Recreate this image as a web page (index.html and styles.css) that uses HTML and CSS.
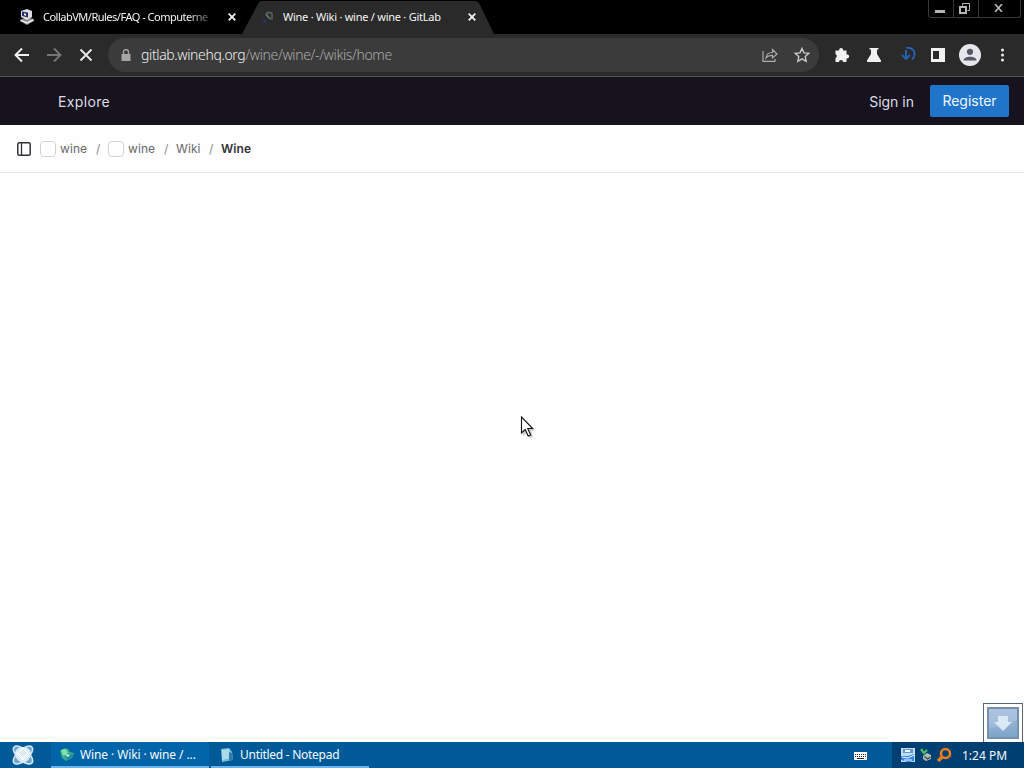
FILE: index.html
```
<!DOCTYPE html>
<html lang="en">
<head>
    <meta charset="UTF-8">
    <meta name="viewport" content="width=device-width, initial-scale=1.0">
    <title>Wine · Wiki · wine / wine · GitLab</title>
    <link rel="stylesheet" href="styles.css">
</head>
<body>
    <div class="tabstrip">
        <div class="tab">
            <svg class="favicon" width="16" height="16" viewBox="0 0 16 16">
                <path d="M1 11l6-3 8 2v2l-7 4-7-4z" fill="#8d8d8d"/>
                <path d="M2 11.500l6 2.500 6-3" fill="none" stroke="#eee" stroke-width="1.500"/>
                <path d="M2 2l6-2 5 2v6l-5 3-6-3z" fill="#ddd"/>
                <path d="M3 2.500l6 1v5L3 7z" fill="#2b2b72"/>
                <path d="M5 4l2 1v2L5 6z" fill="#fff"/>
            </svg>
            <span class="tab-title faded">CollabVM/Rules/FAQ - Computerne</span>
            <svg class="tab-close" width="8" height="8" viewBox="0 0 8 8"><path d="M.7.7l6.600 6.600M7.300.7L.7 7.300"/></svg>
        </div>
        <div class="tab active">
            <svg class="favicon" width="16" height="16" viewBox="0 0 16 16">
                <path d="M6 4.500q3-2 6 0v5H9" fill="none" stroke="#52604f" stroke-width="1.800"/>
                <path d="M6 5l3 4" stroke="#65716c" stroke-width="2"/>
                <path d="M3 11h4l-3 3z" fill="#20388c"/>
            </svg>
            <span class="tab-title">Wine · Wiki · wine / wine · GitLab</span>
            <svg class="tab-close" width="8" height="8" viewBox="0 0 8 8"><path d="M.7.7l6.600 6.600M7.300.7L.7 7.300"/></svg>
        </div>
        <div class="window-buttons">
            <span class="win-btn"><svg width="10" height="10" viewBox="0 0 10 10"><path d="M0 7h10v3H0z" fill="#b5b5b5"/></svg></span>
            <span class="win-btn"><svg width="11" height="11" viewBox="0 0 11 11" fill="none" stroke="#b5b5b5"><path d="M3.500 2.500v-2h7v7h-2" stroke-width="1"/><path d="M1 4h6v6H1z" stroke-width="2"/></svg></span>
            <span class="win-btn wide"><svg width="9" height="8" viewBox="0 0 9 8"><path d="M1 0l7 8M8 0L1 8" stroke="#b5b5b5" stroke-width="1.700"/></svg></span>
        </div>
    </div>

    <div class="toolbar">
        <div class="nav-buttons">
            <svg width="16" height="16" viewBox="0 0 16 16"><path d="M15 8H2M8 1.500L1.500 8 8 14.500" stroke="#f1f1f1"/></svg>
            <svg width="16" height="16" viewBox="0 0 16 16"><path d="M1 8h13M8 1.500L14.500 8 8 14.500" stroke="#767676"/></svg>
            <svg width="16" height="16" viewBox="0 0 16 16"><path d="M2.500 2.500l11 11M13.500 2.500l-11 11" stroke="#e8e8e8"/></svg>
        </div>
        <div class="omnibox">
            <svg class="lock" width="10" height="13" viewBox="0 0 10 13"><path d="M.5 5h9v7h-9z" fill="#a4a4a4"/><path d="M2.500 5V3a2.500 2.500 0 0 1 5 0v2" fill="none" stroke="#a4a4a4" stroke-width="1.400"/></svg>
            <span class="url"><span class="host">gitlab.winehq.org</span>/wine/wine/-/wikis/home</span>
            <svg class="share" width="16" height="16" viewBox="0 0 16 16" fill="none" stroke="#aaa" stroke-width="1.200"><path d="M1 4v10.400h12V12"/><path d="M4 11c.5-4 3-5.500 6.500-5.500V2.500L15 7l-4.500 4V8.300C8 8.300 5.500 9 4 11z"/></svg>
            <svg class="star" width="16" height="16" viewBox="0 0 16 16"><path d="M8 1.500l2 4.400 4.700.5-3.500 3.200 1 4.700L8 11.900l-4.200 2.400 1-4.700L1.300 6.400 6 5.900z" fill="none" stroke="#c9c9c9" stroke-width="1.400"/></svg>
        </div>
        <div class="extensions">
            <svg width="16" height="16" viewBox="0 0 16 16"><path d="M1.500 3.500h3.700a2 2 0 1 1 3.800 0h3.500v4a2 2 0 1 1 0 3.800V15H9a2 2 0 0 0-4 0H1.500v-4a2 2 0 0 0 0-3.800z" fill="#f1f1f1"/></svg>
            <svg width="16" height="16" viewBox="0 0 16 16"><path d="M3.500 1h9v1.500H11V7l4 6.500q.5 1.500-1 1.500H2q-1.500 0-1-1.500L5 7V2.500H3.500z" fill="#f1f1f1"/></svg>
            <svg class="download" width="16" height="16" viewBox="0 0 16 16" fill="none" stroke="#2464b4" stroke-width="1.900"><path d="M6 3v9M2 8l4 4 4-4"/><path d="M6 .5c6 0 9 3 8.500 7-.2 2.200-1.200 3.800-2.500 5"/></svg>
            <svg width="16" height="16" viewBox="0 0 16 16"><path d="M1 1h14v14H1z" fill="#f1f1f1"/><path d="M3 4h6v8H3z" fill="#2a2a2a"/></svg>
            <svg class="profile" width="22" height="22" viewBox="0 0 22 22"><circle cx="11" cy="11" r="11" fill="#e6e7eb"/><circle cx="11" cy="7.800" r="3.100" fill="#555967"/><path d="M4.500 16.500c0-5 13-5 13 0z" fill="#555967"/></svg>
            <svg width="16" height="16" viewBox="0 0 16 16" fill="#eee"><circle cx="8.500" cy="3" r="1.500"/><circle cx="8.500" cy="8" r="1.500"/><circle cx="8.500" cy="13" r="1.500"/></svg>
        </div>
    </div>

    <header class="header">
        <a class="explore">Explore</a>
        <a class="sign-in">Sign in</a>
        <a class="register">Register</a>
    </header>

    <nav class="breadcrumbs">
        <svg class="sidebar-toggle" width="14" height="14" viewBox="0 0 14 14"><rect x=".8" y=".8" width="12.400" height="12.400" rx="1.500" fill="none" stroke="#333238" stroke-width="1.500"/><path d="M4.500 1v12" stroke="#333238" stroke-width="1.300"/></svg>
        <span class="avatar"></span>
        <a class="crumb">wine</a>
        <span class="sep">/</span>
        <span class="avatar"></span>
        <a class="crumb">wine</a>
        <span class="sep">/</span>
        <a class="crumb wiki">Wiki</a>
        <span class="sep">/</span>
        <a class="crumb current">Wine</a>
    </nav>

    <main class="content">
        <svg class="cursor" width="15" height="22" viewBox="0 0 15 22"><path d="M3 3v17l4-3 3 5 3-1-2-6h4z" fill="#ccc"/><path d="M1.500 1v16l3.700-3.500 3 6.500 2.500-1-3-6.500h5z" fill="#fff" stroke="#111" stroke-width="1.100"/></svg>
        <div class="scroll-widget">
            <svg width="32" height="32" viewBox="0 0 32 32">
                <defs><linearGradient id="glass" x1="0" y1="0" x2="0" y2="1"><stop offset="0" stop-color="#adc4df"/><stop offset=".5" stop-color="#a4bddb"/><stop offset="1" stop-color="#7ba2c8"/></linearGradient></defs>
                <rect x="1" y="1" width="30" height="30" fill="url(#glass)" stroke="#7591b0" stroke-width="2"/>
                <path d="M2 23L30 13v17H2z" fill="#7fa5cb" opacity=".5"/>
                <path d="M11 9h10v6h4l-9 9-9-9h4z" fill="#dbe8f5"/>
            </svg>
        </div>
    </main>

    <div class="taskbar">
        <div class="start">
            <svg width="24" height="22" viewBox="0 0 24 22">
                <g fill="#6fa6cd" stroke="#d3e5f2" stroke-width="1.600"><ellipse cx="12" cy="11" rx="12" ry="5.500" transform="rotate(42 12 11)"/><ellipse cx="12" cy="11" rx="12" ry="5.500" transform="rotate(-42 12 11)"/></g>
                <path d="M12 3c5 0 8 3 8 7s-4 8-8 9c-4-1-8-5-8-9s3-7 8-7z" fill="#dcebf5"/>
                <path d="M5 9l7 7 7-7M12 4L7 9l5 5 5-5z" fill="none" stroke="#fff"/>
            </svg>
        </div>
        <div class="task active">
            <svg width="16" height="16" viewBox="0 0 16 16"><path d="M1 4q4-4 8-2l2 3 4 1-2 5-6 3-4-3z" fill="#36ad8b"/><path d="M2 3l5-1 2 4-5 3z" fill="#81dfa8"/><path d="M8 9l6-2-2 4-5 2z" fill="#2580a4"/><path d="M6 7l5 1-2 2z" fill="#d1f5e5"/></svg>
            <span class="task-title wine">Wine · Wiki · wine / ...</span>
        </div>
        <div class="task">
            <svg width="16" height="16" viewBox="0 0 16 16"><path d="M2 2l8-1 3 4 1 8-11 2z" fill="#79bfda"/><path d="M3 3l7-1 1 9-8 2z" fill="#a9dbea"/><path d="M10 5l3 1 1 7-4 1z" fill="#2e7eaa"/></svg>
            <span class="task-title notepad">Untitled - Notepad</span>
        </div>
        <svg class="keyboard" width="13" height="9" viewBox="0 0 13 9"><path d="M0 1h13v8H0z" fill="#fff"/><path d="M1 3.500h11M1 5.500h11" stroke="#222" stroke-dasharray="1 1"/><path d="M3 7.500h7" stroke="#222"/></svg>
        <div class="tray">
            <svg width="16" height="16" viewBox="0 0 16 16"><path d="M1 1h14v14H1z" fill="#bfdefb"/><path d="M3 2h10v4H3z" fill="#6398d4"/><path d="M5 3h5v2H5z" fill="#fff"/><path d="M1 9h7l6-2v7l-6 1-7-2z" fill="#3485e5"/><path d="M2 10l6 1 6-3M4 13h8" fill="none" stroke="#eff9ff"/></svg>
            <svg width="14" height="16" viewBox="0 0 14 16"><path d="M2 2l3 4 3-3" fill="none" stroke="#48bd64" stroke-width="2.200"/><path d="M4 9l4-3 4 2v4l-5 2-3-2z" fill="#b1b9b3"/><path d="M5.500 9.500l3 2.500 3-2" fill="none" stroke="#344a49" stroke-width="1.200"/></svg>
            <svg width="16" height="16" viewBox="0 0 16 16" fill="none" stroke="#ed7d18"><circle cx="9.500" cy="6.500" r="4.500" stroke-width="2.600"/><path d="M6 10l-4 4" stroke-width="3.300"/></svg>
            <span class="clock">1:24 PM</span>
        </div>
    </div>
</body>
</html>
```
FILE: styles.css
```
* {
    box-sizing: border-box;
}

body {
    margin: 0;
    width: 1024px;
    height: 768px;
    overflow: hidden;
    display: flex;
    flex-direction: column;
    background: #fefefe;
    font-family: "Noto Sans", sans-serif;
}

svg {
    display: block;
    flex: none;
}

span, a {
    white-space: nowrap;
}

/* browser window */
.tabstrip {
    height: 34px;
    flex: none;
    display: flex;
    background: #000;
}

.tab {
    width: 242px;
    height: 34px;
    padding: 0 5px 1px 19px;
    display: flex;
    align-items: center;
    color: #f4f4f4;
    font-size: 11px;
}

.tab.active {
    width: 252px;
    padding: 0 18px 1px 18px;
    background: #2a2a2a;
    clip-path: polygon(0 100%, 17px 2px, 20px 1px, 234px 1px, 237px 3px, 252px 100%);
}

.tab-title {
    width: 169px;
    margin-left: 8px;
    letter-spacing: -0.25px;
}

.tab.active .tab-title {
    margin-left: 7px;
}

.tab-title.faded {
    letter-spacing: -0.5px;
    -webkit-mask-image: linear-gradient(to right, #000 145px, rgba(0, 0, 0, 0.15) 169px);
    mask-image: linear-gradient(to right, #000 145px, rgba(0, 0, 0, 0.15) 169px);
}

.tab-close {
    margin-left: 16px;
    stroke: #f1f1f1;
    stroke-width: 1.8;
}

.window-buttons {
    display: flex;
    height: 18px;
    margin-left: auto;
    margin-right: 3px;
    border: 1px solid #373737;
    border-top: none;
    border-radius: 0 0 3px 3px;
}

.win-btn {
    width: 25px;
    display: flex;
    align-items: center;
    justify-content: center;
    padding: 0 3px 1px 0;
    border-right: 1px solid #373737;
}

.win-btn.wide {
    width: 41px;
    border-right: none;
}

.toolbar {
    height: 43px;
    flex: none;
    display: flex;
    align-items: center;
    background: #2a2a2a;
    border-bottom: 1px solid #55555a;
}

.nav-buttons {
    display: flex;
    gap: 16px;
    padding-left: 14px;
}

.nav-buttons path {
    fill: none;
    stroke-width: 1.9;
}

.omnibox {
    width: 711px;
    height: 34px;
    margin-left: 14px;
    padding: 0 9px 0 13px;
    display: flex;
    align-items: center;
    border-radius: 17px;
    background: #3b3b3b;
}

.url {
    margin-left: 10px;
    padding-bottom: 2px;
    color: #a9a9a9;
    font-size: 14px;
    font-weight: 300;
    letter-spacing: -0.38px;
}

.host {
    color: #f0f0f0;
}

.share {
    margin-left: auto;
}

.star {
    margin-left: 16px;
}

.extensions {
    display: flex;
    align-items: center;
    gap: 16px;
    margin-left: 15px;
}

.download {
    margin: 0 -2px 0 2px;
}

.profile {
    margin: 0 -3px;
}

/* gitlab page */
.header {
    height: 48px;
    flex: none;
    display: flex;
    align-items: center;
    padding: 0 15px 0 58px;
    background: #16131f;
    color: #dedce4;
    font-family: Inter, sans-serif;
    font-size: 14px;
}

.explore {
    letter-spacing: 0.35px;
}

.sign-in {
    margin-left: auto;
}

.register {
    width: 79px;
    height: 32px;
    margin-left: 16px;
    border-radius: 2px;
    background: #2074ca;
    color: #eef6ff;
    line-height: 32px;
    text-align: center;
}

.breadcrumbs {
    height: 48px;
    flex: none;
    display: flex;
    align-items: center;
    padding-left: 17px;
    border-bottom: 1px solid #e9e9eb;
    background: #fefefe;
    color: #68676d;
    font-family: Inter, sans-serif;
    font-size: 12px;
    letter-spacing: 0.1px;
}

.avatar {
    width: 16px;
    height: 16px;
    border: 1px solid #d2d2d5;
    border-radius: 4px;
}

.sidebar-toggle {
    margin-right: 9px;
}

.crumb {
    width: 28px;
    margin-left: 4px;
}

.sep {
    width: 4px;
    margin: 0 8px;
    color: #8b8a90;
}

.crumb.wiki {
    width: 25px;
    margin-left: 0;
}

.crumb.current {
    margin-left: 0;
    color: #333238;
    font-weight: 600;
}

.content {
    position: relative;
    flex: 1;
    display: flex;
    align-items: flex-end;
    justify-content: flex-end;
}

.cursor {
    position: absolute;
    left: 520px;
    top: 243px;
}

.scroll-widget {
    width: 40px;
    height: 39px;
    margin-right: 1px;
    padding: 3px;
    border: 1px solid #5d6674;
    border-bottom: none;
    background: #fff;
}

/* desktop taskbar */
.taskbar {
    height: 26px;
    flex: none;
    display: flex;
    align-items: center;
    background: #005a98;
    color: #f4faff;
    font-size: 12px;
}

.start {
    width: 51px;
    padding-left: 11px;
}

.task {
    width: 158px;
    height: 26px;
    padding: 1px 8px 0;
    display: flex;
    align-items: center;
    border-bottom: 2px solid #68b5ee;
}

.task.active {
    margin-right: 2px;
    background: #0064a8;
}

.task-title {
    margin-left: 5px;
}

.task-title.wine {
    letter-spacing: -0.1px;
}

.task-title.notepad {
    letter-spacing: -0.28px;
}

.keyboard {
    margin-left: auto;
    margin-right: 25px;
}

.tray {
    width: 132px;
    height: 26px;
    padding-left: 8px;
    display: flex;
    align-items: center;
    background: #003f72;
}

.tray svg {
    margin-right: 3px;
}

.clock {
    margin-left: 7px;
}
```
